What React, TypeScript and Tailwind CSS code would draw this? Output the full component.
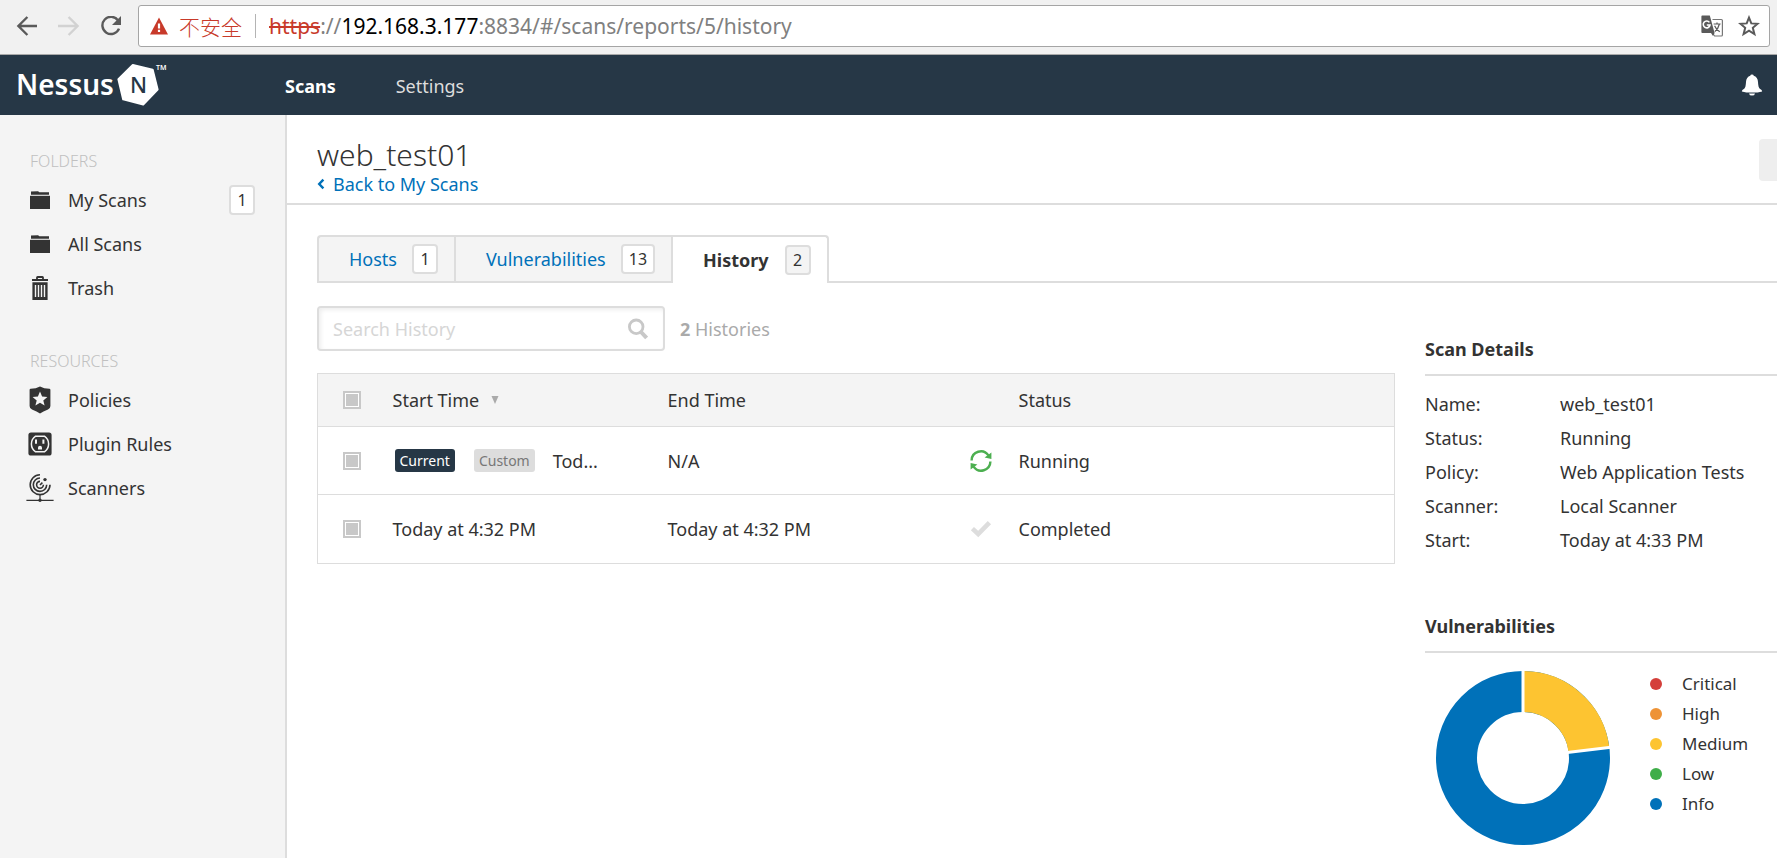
import React from 'react';

const Folder = () => (
  <svg className="w-5 h-[18px]" viewBox="0 0 20 18" fill="#333">
    <path d="M1 0.6L8 0.2L9.4 1.2H19V3.8H1Z" />
    <path d="M0 4.8H20V18H0Z" />
  </svg>
);

const Trash = () => (
  <svg className="w-5 h-6" viewBox="0 0 20 24">
    <path d="M7 3.2V1.6Q7 1 7.6 1H12.4Q13 1 13 1.6V3.2" fill="none" stroke="#333" strokeWidth="1.8" />
    <path d="M2 3H18V5H2Z M2.4 6.2H17.6V24H2.4Z" fill="#333" />
    <path d="M5.5 9V21 M8.5 9V21 M11.5 9V21 M14.5 9V21" stroke="#f4f4f4" strokeWidth="1.4" />
  </svg>
);

const Shield = () => (
  <svg className="w-[22px] h-7" viewBox="0 0 22 28">
    <path d="M11 0.4Q15 2.6 20.4 2.8Q21.4 2.8 21.4 4V20Q21.4 22.6 19 23.6Q14 25.4 11 27.6Q8 25.4 3 23.6Q0.6 22.6 0.6 20V4Q0.6 2.8 1.6 2.8Q7 2.6 11 0.4Z" fill="#333" />
    <path d="M11 5.6L13.1 10.6L18.4 11L14.3 14.4L15.6 19.6L11 16.8L6.4 19.6L7.7 14.4L3.6 11L8.9 10.6Z" fill="#f4f4f4" />
  </svg>
);

const Outlet = () => (
  <svg className="w-6 h-6" viewBox="0 0 24 24">
    <rect x="0.4" y="0.4" width="23.2" height="23.2" rx="2.6" fill="#333" />
    <path d="M7.6 4.2H16.4C22 8 22 16 16.4 19.8H7.6C2 16 2 8 7.6 4.2Z" fill="none" stroke="#f4f4f4" strokeWidth="1.5" />
    <path d="M7 7.4H9V11.8H7Z M14.4 7.4H16.4V11.8H14.4Z M10 17.4V15.8A2 2 0 0 1 14 15.8V17.4Z" fill="#f4f4f4" />
  </svg>
);

const Radar = () => (
  <svg className="w-7 h-7" viewBox="0 0 28 28" fill="none" stroke="#333" strokeWidth="1.6">
    <path d="M14 0.8A9.9 9.9 0 1 0 24 10.8" />
    <path d="M14 4A6.7 6.7 0 1 0 20.7 10.8" />
    <path d="M14 7.4A3.4 3.4 0 1 0 17.4 10.8" />
    <path d="M14 11L16.4 8.6" />
    <circle cx="19" cy="5.6" r="1.7" fill="#333" stroke="none" />
    <path d="M14 20.4V26 M0.4 26.4H27.6" strokeWidth="1.2" />
    <circle cx="14" cy="26.2" r="1.7" fill="#333" stroke="none" />
  </svg>
);

const folders = [
  { label: 'My Scans', icon: <Folder />, count: 1 },
  { label: 'All Scans', icon: <Folder /> },
  { label: 'Trash', icon: <Trash /> },
];

const resources = [
  { label: 'Policies', icon: <Shield /> },
  { label: 'Plugin Rules', icon: <Outlet /> },
  { label: 'Scanners', icon: <Radar /> },
];

const details = [
  ['Name:', 'web_test01'],
  ['Status:', 'Running'],
  ['Policy:', 'Web Application Tests'],
  ['Scanner:', 'Local Scanner'],
  ['Start:', 'Today at 4:33 PM'],
];

const severities = [
  { label: 'Critical', dot: 'bg-[#d43f3a]' },
  { label: 'High', dot: 'bg-[#ee9336]' },
  { label: 'Medium', dot: 'bg-[#fdc431]' },
  { label: 'Low', dot: 'bg-[#3fae49]' },
  { label: 'Info', dot: 'bg-[#0071b9]' },
];

const BrowserBar = () => (
  <div className="h-[55px] bg-[#f1f1f1] border-b border-[#a9a9a9] flex items-start pt-[5px] pl-4 pr-[7px]">
    <div className="flex items-center h-[42px] gap-5 w-[122px] shrink-0">
      <button aria-label="Back">
        <svg className="w-[22px] h-5" viewBox="0 0 22 20" fill="none" stroke="#5a5a5a" strokeWidth="2.4">
          <path d="M21 10H3 M11.4 1L2.4 10L11.4 19" />
        </svg>
      </button>
      <button aria-label="Forward">
        <svg className="w-[22px] h-5" viewBox="0 0 22 20" fill="none" stroke="#d2d2d2" strokeWidth="2.4">
          <path d="M0 10H19 M10.6 1L19.6 10L10.6 19" />
        </svg>
      </button>
      <button aria-label="Reload">
        <svg className="w-[22px] h-5" viewBox="0 0 22 20">
          <path d="M18 4.4A8.6 8.6 0 1 0 19 12.6" fill="none" stroke="#5a5a5a" strokeWidth="2.4" />
          <path d="M21 0V9H12Z" fill="#5a5a5a" />
        </svg>
      </button>
    </div>
    <div className="flex-1 h-[42px] bg-white border border-[#a5a5a5] rounded-[3px] flex items-center pl-[11px] pr-[9px] text-[21px] whitespace-nowrap">
      <svg className="w-[18px] h-[18px] mr-[11px]" viewBox="0 0 18 18">
        <path d="M9 0.6L18 17.4H0Z" fill="#c83a2a" />
        <path d="M7.9 6.4H10.1V11.4H7.9Z M7.9 12.8H10.1V15H7.9Z" fill="#fff" />
      </svg>
      <span className="font-['Noto_Sans_CJK_SC',sans-serif] font-light text-[#c83a2a]">不安全</span>
      <span className="w-px h-6 bg-[#b4b4b4] mx-[13px]" />
      <span className="flex-1 text-[#808080]">
        <s className="text-[#c83a2a]">https</s>://<span className="text-black">192.168.3.177</span>:8834/#/scans/reports/5/history
      </span>
      <button aria-label="Translate" className="mr-[15px]">
        <svg className="w-[22px] h-[22px]" viewBox="0 0 22 22">
          <path d="M11.5 4.5H20.4Q21.4 4.5 21.4 5.5V20Q21.4 21 20.4 21H13.6L11 17.4" fill="none" stroke="#777" strokeWidth="1.2" />
          <path d="M1.2 0.4H8.8L13.6 18H1.2Q0.4 18 0.4 17V1.4Q0.4 0.4 1.2 0.4Z M10 18H13.6L12 21Z" fill="#5a5a5a" />
          <path d="M8.4 7.4A3.4 3.4 0 1 0 9 10H5.8" fill="none" stroke="#fff" strokeWidth="1.6" />
          <path d="M12.6 9H19.6 M16 7.4V9 M18.4 9Q17.4 13.6 13.8 16.6 M13.6 10.8Q15 14.6 18.8 16.8" fill="none" stroke="#5a5a5a" strokeWidth="1.2" />
        </svg>
      </button>
      <button aria-label="Bookmark">
        <svg className="w-[22px] h-[22px]" viewBox="0 0 22 22" fill="none" stroke="#5a5a5a" strokeWidth="2">
          <path d="M11 2.6L13.3 8.4L19.6 8.8L14.8 12.8L16.4 19L11 15.6L5.6 19L7.2 12.8L2.4 8.8L8.7 8.4Z" />
        </svg>
      </button>
    </div>
  </div>
);

const NavBar = () => (
  <header className="h-[60px] bg-[#263746] flex items-center pl-4 pr-[14px]">
    <a href="#/" className="flex items-center w-[269px] shrink-0 text-white">
      <span className="text-[28px] font-semibold leading-[54px] pb-[2px]">Nessus</span>
      <svg className="w-[50px] h-[46px] ml-[3px]" viewBox="0 0 50 46">
        <path
          d="M15.8 3L35.6 7.6L40.6 27.6L26.2 42.6L6.2 37.4L1.4 17.2Z"
          fill="#fff"
          stroke="#fff"
          strokeWidth="2"
          strokeLinejoin="round"
        />
        <text x="13" y="31" fontSize="22" fontWeight="500" fill="#263746">N</text>
        <text x="39" y="8" fontSize="7" fontWeight="600" fill="#fff">TM</text>
      </svg>
    </a>
    <nav className="flex flex-1 gap-[60px] pt-[2px]">
      <a href="#/scans" className="font-bold text-white">Scans</a>
      <a href="#/settings" className="text-[#dddddd]">Settings</a>
    </nav>
    <button aria-label="Notifications">
      <svg className="w-[22px] h-[22px]" viewBox="0 0 22 22" fill="#fff">
        <path d="M9.4 1.2Q9.4 0.4 11 0.4Q12.6 0.4 12.6 1.2V1.8Q16.8 3 17 8Q17.2 13.4 18.8 14.8Q21.2 16 21.2 17.4Q17 18.6 11 18.6Q5 18.6 0.8 17.4Q0.8 16 3.2 14.8Q4.8 13.4 5 8Q5.2 3 9.4 1.8Z" />
        <path d="M8 19.4H14Q13.6 21.6 11 21.6Q8.4 21.6 8 19.4Z" />
      </svg>
    </button>
  </header>
);

const Badge = ({ children, muted }: { children: React.ReactNode; muted?: boolean }) => (
  <span
    className={`h-[30px] min-w-[26px] px-[6px] rounded border-2 border-[#ddd] flex items-center justify-center text-base font-normal text-[#333] ${
      muted ? 'bg-[#f4f4f4]' : 'bg-white'
    }`}
  >
    {children}
  </span>
);

interface SideItem {
  label: string;
  icon: React.ReactNode;
  count?: number;
}

const SideGroup = ({ title, items }: { title: string; items: SideItem[] }) => (
  <section>
    <h2 className="h-6 px-[30px] mb-[5px] text-base leading-6 font-light text-[#c0c0c0]">{title}</h2>
    <ul>
      {items.map((item) => (
        <li key={item.label}>
          <a href="#/folders" className="flex items-center h-11 pl-[26px] pr-[30px] text-[#333]">
            <span className="w-7 mr-[14px] flex justify-center">{item.icon}</span>
            <span className="flex-1">{item.label}</span>
            {item.count && <Badge>{item.count}</Badge>}
          </a>
        </li>
      ))}
    </ul>
  </section>
);

const Check = ({ label }: { label: string }) => (
  <input
    type="checkbox"
    aria-label={label}
    className="block appearance-none w-[18px] h-[18px] border-2 border-[#c8c8c8] bg-[#c8c8c8] shadow-[inset_0_0_0_1px_#fff]"
  />
);

const HistoryTable = () => (
  <table className="w-full table-fixed border border-[#ddd] border-collapse text-left">
    <colgroup>
      <col className="w-[75px]" />
      <col className="w-[275px]" />
      <col className="w-[302px]" />
      <col className="w-[49px]" />
      <col />
    </colgroup>
    <thead>
      <tr className="h-[53px] bg-[#f4f4f4] border-b border-[#ddd]">
        <th className="pl-[25px]"><Check label="Select all" /></th>
        <th className="font-normal">
          <button className="flex items-center gap-3">
            Start Time
            <svg className="w-2 h-2" viewBox="0 0 8 8"><path d="M0.5 0H7.5L4 8Z" fill="#aaa" /></svg>
          </button>
        </th>
        <th className="font-normal">End Time</th>
        <th />
        <th className="font-normal">Status</th>
      </tr>
    </thead>
    <tbody>
      <tr className="h-[68px] border-b border-[#ddd]">
        <td className="pl-[25px]"><Check label="Select running scan" /></td>
        <td>
          <div className="flex items-center pl-[2px]">
            <span className="h-[23px] px-[5px] rounded-[3px] bg-[#263746] text-white text-sm leading-6">Current</span>
            <span className="h-[23px] ml-[19px] px-[5px] rounded-[3px] bg-[#ddd] text-[#777] text-sm leading-6">Custom</span>
            <span className="ml-[18px]">Tod...</span>
          </div>
        </td>
        <td>N/A</td>
        <td>
          <svg className="w-[22px] h-[22px]" viewBox="0 0 22 22">
            <path d="M1.6 10.4A9.2 9.2 0 0 1 18.4 5.4 M20.4 11.6A9.2 9.2 0 0 1 3.6 16.6" fill="none" stroke="#4caf50" strokeWidth="2.4" />
            <path d="M21.4 2.6V9L14.6 7.4Z M0.6 19.4V13L7.4 14.6Z" fill="#4caf50" />
          </svg>
        </td>
        <td>Running</td>
      </tr>
      <tr className="h-[69px]">
        <td className="pl-[25px]"><Check label="Select completed scan" /></td>
        <td>Today at 4:32 PM</td>
        <td>Today at 4:32 PM</td>
        <td>
          <svg className="w-[22px] h-[18px]" viewBox="0 0 22 18">
            <path d="M2.4 8.6L8.2 14L19.4 2.6" fill="none" stroke="#ddd" strokeWidth="4.6" />
          </svg>
        </td>
        <td>Completed</td>
      </tr>
    </tbody>
  </table>
);

// ring slices: medium is 3 of 13, the rest is info
const Donut = () => (
  <svg className="w-[178px] h-[178px]" viewBox="-89 -89 178 178" role="img" aria-label="Vulnerabilities by severity">
    <circle r="66.5" fill="none" stroke="#0071b9" strokeWidth="41" />
    <path d="M0 -66.5A66.5 66.5 0 0 1 66 -8" fill="none" stroke="#fdc431" strokeWidth="41" />
    <path d="M0 -89V-40 M40 -4.9L88 -10.7" stroke="#fff" strokeWidth="3" />
  </svg>
);

const PanelTitle = ({ children }: { children: React.ReactNode }) => (
  <h2 className="h-[42px] border-b-2 border-[#ddd] font-bold leading-[30px]">{children}</h2>
);

export default function App() {
  return (
    <div className="min-h-screen flex flex-col bg-white text-[#333] text-lg leading-6 font-['Noto_Sans','Noto_Sans_CJK_SC',sans-serif]">
      <BrowserBar />
      <NavBar />
      <div className="flex flex-1">
        <aside className="w-[287px] shrink-0 bg-[#f4f4f4] border-r-2 border-[#ddd] pt-[34px] flex flex-col gap-[39px]">
          <SideGroup title="FOLDERS" items={folders} />
          <SideGroup title="RESOURCES" items={resources} />
        </aside>

        <main className="flex-1 min-w-0">
          <div className="h-[90px] border-b-2 border-[#ddd] flex justify-between pl-[30px]">
            <div className="pt-[22px]">
              <h1 className="text-3xl leading-[35px] font-light">web_test01</h1>
              <a href="#/scans" className="flex items-center gap-2 text-[#0071b9]">
                <svg className="w-2 h-3" viewBox="0 0 8 12">
                  <path d="M6.4 1.6L2.2 6L6.4 10.4" fill="none" stroke="#0071b9" strokeWidth="2.4" />
                </svg>
                Back to My Scans
              </a>
            </div>
            <button aria-label="Configure" className="mt-6 w-[18px] h-[42px] rounded-l bg-[#eee]" />
          </div>

          <div className="flex pt-[30px] pl-[30px]">
            <div className="flex h-12 border-2 border-r-0 border-[#ddd] rounded-tl bg-[#f4f4f4]">
              <button className="flex items-center gap-[15px] pl-[30px] pr-4 text-[#0071b9]">
                Hosts <Badge>1</Badge>
              </button>
              <button className="flex items-center gap-[15px] pl-[30px] pr-4 border-l-2 border-[#ddd] text-[#0071b9]">
                Vulnerabilities <Badge>13</Badge>
              </button>
            </div>
            <button className="flex items-center h-12 gap-4 pl-[30px] pr-4 border-2 border-b-0 border-[#ddd] rounded-tr font-bold">
              History <Badge muted>2</Badge>
            </button>
            <div className="flex-1 border-b-2 border-[#ddd]" />
          </div>

          <div className="flex gap-[30px] pt-[23px] pl-[30px]">
            <div className="flex-1 min-w-0">
              <div className="flex items-center gap-[15px] mb-[22px]">
                <label className="flex items-center w-[348px] h-[45px] pl-[14px] pr-[15px] border-2 border-[#ddd] rounded shadow-[inset_2px_2px_4px_#eee]">
                  <input
                    type="text"
                    aria-label="Search History"
                    placeholder="Search History"
                    className="flex-1 min-w-0 outline-none bg-transparent placeholder:text-[#d6d6d6]"
                  />
                  <svg className="w-5 h-[22px]" viewBox="0 0 20 22" fill="none" stroke="#c8c8c8">
                    <circle cx="8.2" cy="8.8" r="6.8" strokeWidth="2.8" />
                    <path d="M13 14L18.6 20" strokeWidth="4" />
                  </svg>
                </label>
                <span className="text-[#aaa]"><b>2</b> Histories</span>
              </div>
              <HistoryTable />
            </div>

            <aside className="w-[352px] shrink-0 pt-7">
              <PanelTitle>Scan Details</PanelTitle>
              <dl className="pt-[11px]">
                {details.map(([name, value]) => (
                  <div key={name} className="flex h-[34px] items-center">
                    <dt className="w-[135px]">{name}</dt>
                    <dd>{value}</dd>
                  </div>
                ))}
              </dl>
              <div className="pt-[54px]">
                <PanelTitle>Vulnerabilities</PanelTitle>
                <div className="flex items-start pt-4 pl-[9px]">
                  <Donut />
                  <ul className="ml-[38px] text-[17px]">
                    {severities.map((s) => (
                      <li key={s.label} className="flex items-center h-[30px] gap-5">
                        <span className={`w-3 h-3 rounded-full ${s.dot}`} />
                        {s.label}
                      </li>
                    ))}
                  </ul>
                </div>
              </div>
            </aside>
          </div>
        </main>
      </div>
    </div>
  );
}
